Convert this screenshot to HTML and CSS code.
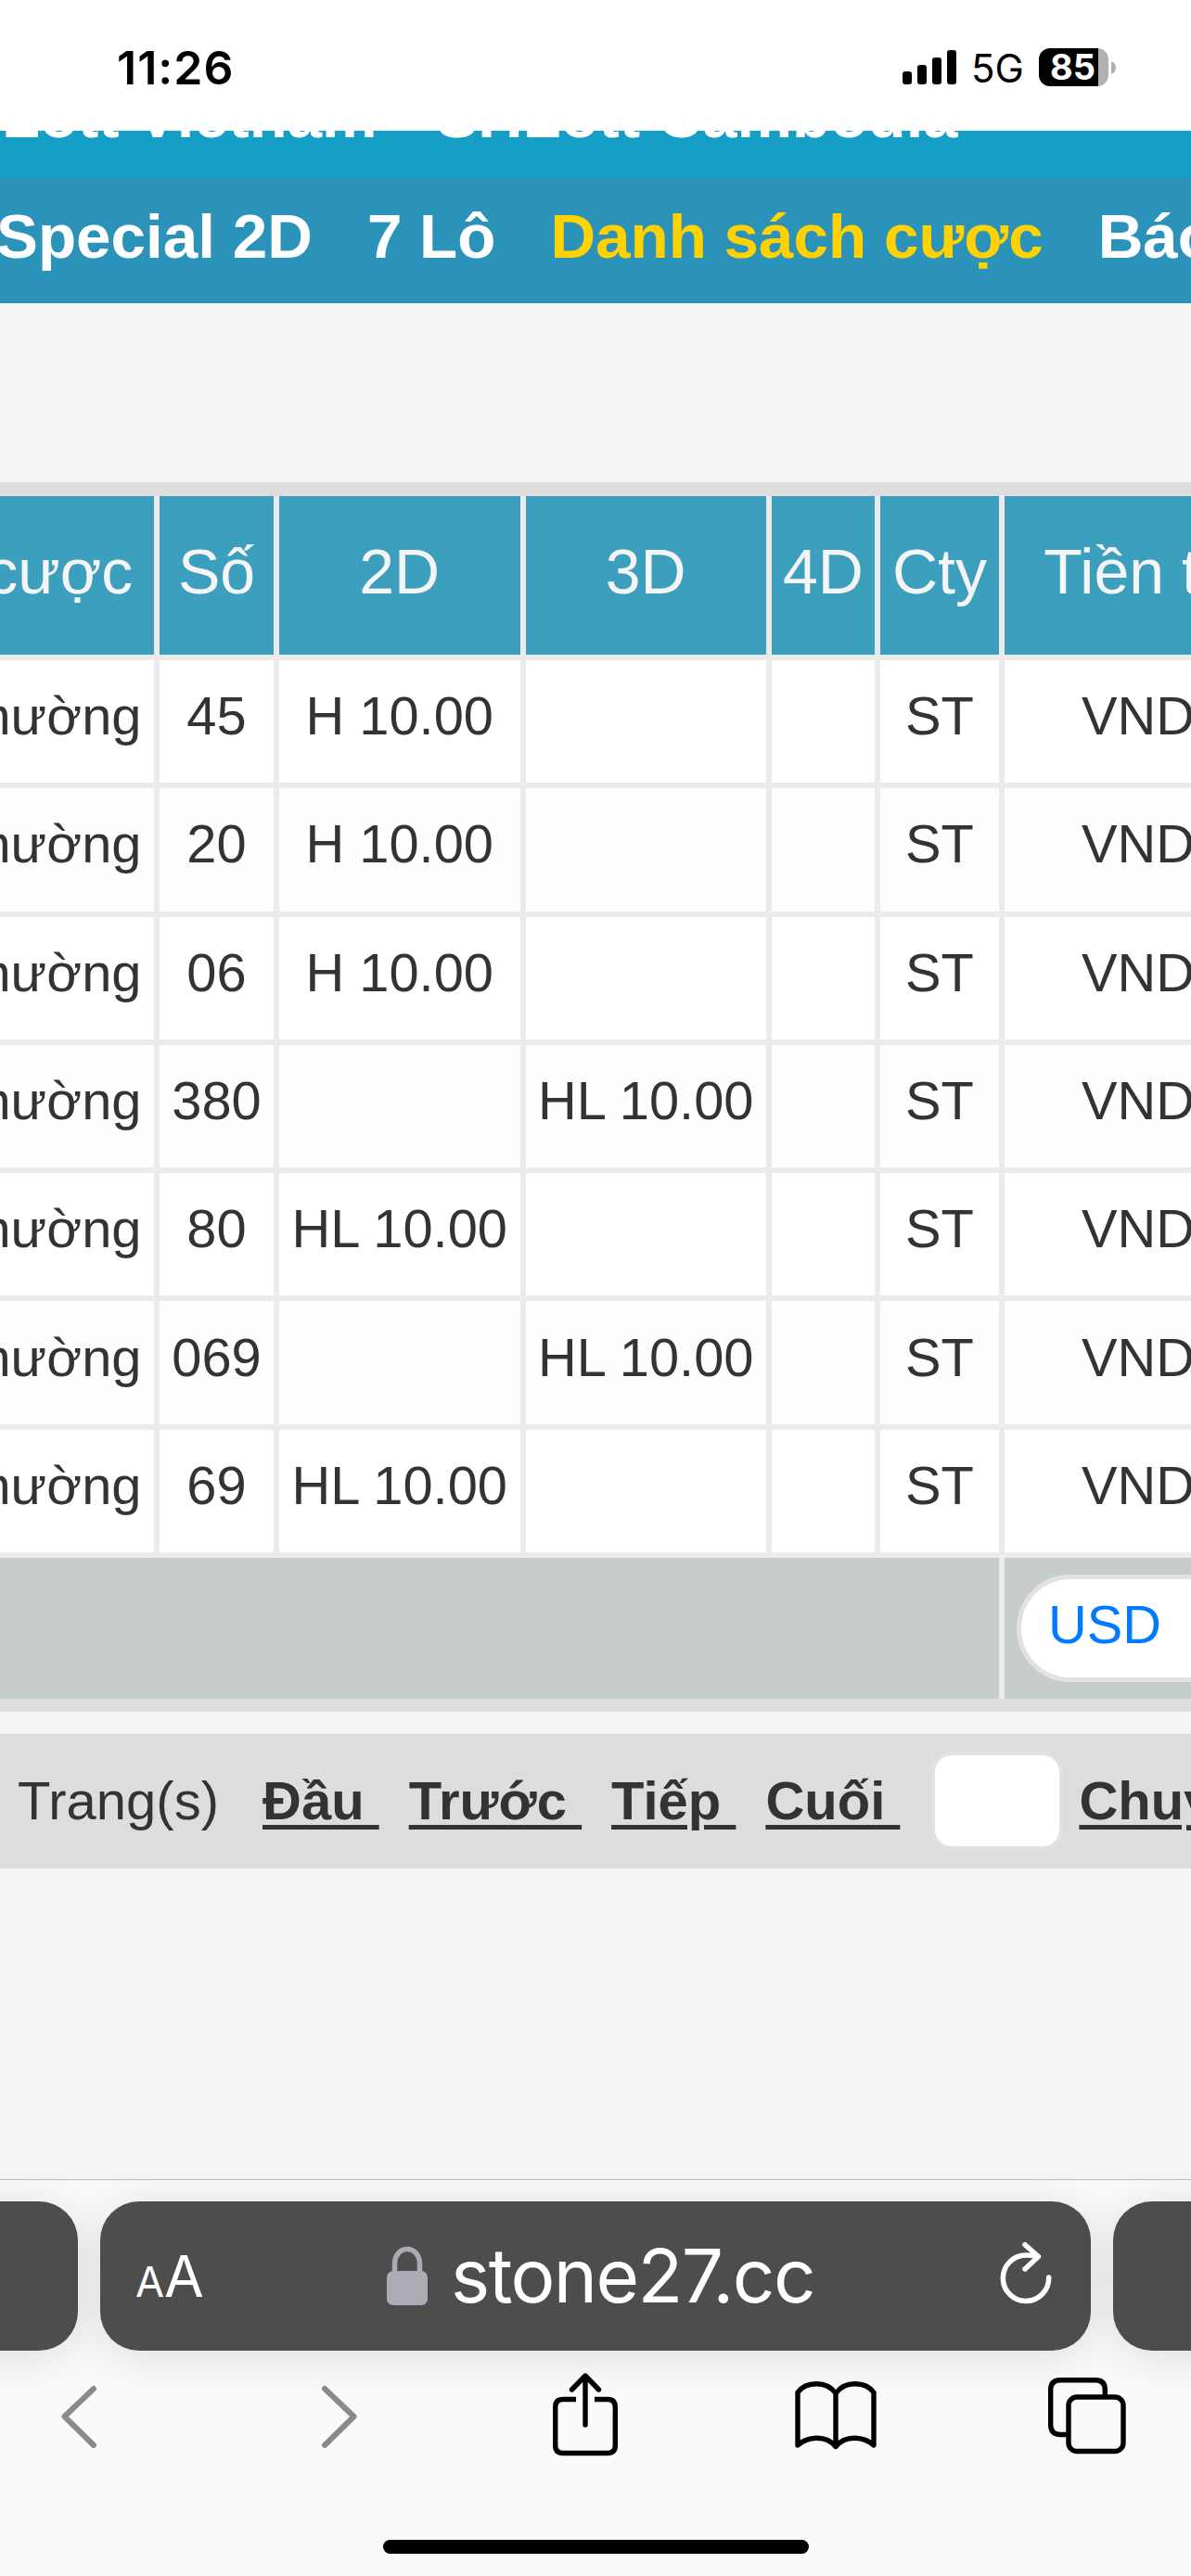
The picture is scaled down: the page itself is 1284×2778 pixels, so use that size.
FILE: index.html
```html
<!DOCTYPE html>
<html lang="vi">
<head>
    <meta charset="UTF-8">
    <meta name="viewport" content="width=device-width, initial-scale=1.0">
    <title>Danh sách cược</title>
    <link rel="stylesheet" href="styles.css">
</head>
<body>
    <div class="status-bar">
        <span class="time">11:26</span>
        <svg class="signal" width="58" height="38" viewBox="0 0 58 38">
            <rect x="0" y="23" width="10" height="14" rx="3"/>
            <rect x="16" y="16" width="10" height="21" rx="3"/>
            <rect x="32" y="8" width="10" height="29" rx="3"/>
            <rect x="48" y="0" width="10" height="37" rx="3"/>
        </svg>
        <span class="network">5G</span>
        <div class="battery"><span>85</span></div>
        <svg class="battery-nub" width="5" height="14" viewBox="0 0 5 14"><path d="M0 0Q5 2 5 7T0 14Z"/></svg>
    </div>

    <div class="page">
        <div class="site-bar">
            <span>SHLott Vietnam</span>
            <span>SHLott Cambodia</span>
        </div>
        <div class="menu">
            <a>Special 2D</a>
            <a>7 Lô</a>
            <a class="active">Danh sách cược</a>
            <a>Báo cáo</a>
        </div>

        <table class="bets">
            <colgroup>
                <col class="col-type"><col class="col-number"><col class="col-2d"><col class="col-3d">
                <col class="col-4d"><col class="col-company"><col class="col-currency">
            </colgroup>
            <thead>
                <tr><th>Loại cược</th><th>Số</th><th>2D</th><th>3D</th><th>4D</th><th>Cty</th><th>Tiền tệ</th></tr>
            </thead>
            <tbody>
                <tr><td>Bình thường</td><td>45</td><td>H 10.00</td><td></td><td></td><td>ST</td><td>VND</td></tr>
                <tr><td>Bình thường</td><td>20</td><td>H 10.00</td><td></td><td></td><td>ST</td><td>VND</td></tr>
                <tr><td>Bình thường</td><td>06</td><td>H 10.00</td><td></td><td></td><td>ST</td><td>VND</td></tr>
                <tr><td>Bình thường</td><td>380</td><td></td><td>HL 10.00</td><td></td><td>ST</td><td>VND</td></tr>
                <tr><td>Bình thường</td><td>80</td><td>HL 10.00</td><td></td><td></td><td>ST</td><td>VND</td></tr>
                <tr><td>Bình thường</td><td>069</td><td></td><td>HL 10.00</td><td></td><td>ST</td><td>VND</td></tr>
                <tr><td>Bình thường</td><td>69</td><td>HL 10.00</td><td></td><td></td><td>ST</td><td>VND</td></tr>
            </tbody>
            <tfoot>
                <tr><td colspan="6"></td><td><div class="currency">USD</div></td></tr>
            </tfoot>
        </table>

        <div class="pager">
            <span class="pages">Trang(s)</span>
            <a>Đầu&nbsp;</a>
            <a>Trước&nbsp;</a>
            <a>Tiếp&nbsp;</a>
            <a>Cuối&nbsp;</a>
            <div class="page-input"></div>
            <a>Chuyển</a>
        </div>
    </div>

    <div class="browser">
        <div class="tabs">
            <div class="tab"></div>
            <div class="tab current">
                <span class="text-size"><small>A</small>A</span>
                <svg class="lock" width="44" height="64" viewBox="0 0 44 64">
                    <path d="M8.500 30V20C8.500 -2 35.500 -2 35.500 20V30" fill="none" stroke="#acabb3" stroke-width="5.500"/>
                    <rect y="27" width="44" height="37" rx="7" fill="#acabb3"/>
                </svg>
                <span class="address">stone27.cc</span>
                <svg class="reload" width="56" height="70" viewBox="0 0 56 70">
                    <path d="M52.700 38A24.700 24.700 0 1 1 28 14Q35 14 40 15.500M27 2.800L41.500 15.500L27 29"/>
                </svg>
            </div>
            <div class="tab"></div>
        </div>
        <div class="toolbar">
            <svg class="icon muted" width="40" height="70" viewBox="0 0 40 70"><path d="M36 5L4.500 35L36 66"/></svg>
            <svg class="icon muted forward" width="40" height="70" viewBox="0 0 40 70"><path d="M4 5L35.500 35L4 66"/></svg>
            <svg class="icon share" width="70" height="90" viewBox="0 0 70 90">
                <path d="M25 28.500H11Q2.700 28.500 2.700 37V78Q2.700 86.500 11 86.500H59Q67.300 86.500 67.300 78V37Q67.300 28.500 59 28.500H45" stroke-linecap="butt"/>
                <path d="M35 56V4M20.500 18L35 3L49.500 18"/>
            </svg>
            <svg class="icon book" width="88" height="74" viewBox="0 0 88 74">
                <path d="M44 70.500V13C34 -1 12 0 3 12V69C13 60 33 57 44 70.500C55 57 75 60 85 69V12C76 0 54 -1 44 13"/>
            </svg>
            <svg class="icon all-tabs" width="84" height="83" viewBox="0 0 84 83">
                <path d="M20 61.500H13Q2.700 61.500 2.700 51V13Q2.700 2.700 13 2.700H51Q61.300 2.700 61.300 13V19" stroke-linecap="butt"/>
                <rect x="22" y="21" width="59" height="58.500" rx="9"/>
            </svg>
        </div>
        <div class="home-indicator"></div>
    </div>
</body>
</html>
```
FILE: styles.css
```css
/* Reset */
* {
    box-sizing: border-box;
}

body {
    margin: 0;
    width: 1284px;
    height: 2778px;
    overflow: hidden;
    display: flex;
    flex-direction: column;
    background: #f5f5f5;
    color: #333;
    font-family: "Liberation Sans", Arial, sans-serif;
}

/* Status bar */
.status-bar {
    height: 141px;
    flex: none;
    display: flex;
    align-items: center;
    padding: 4px 0 0 126px;
    background: #fff;
    color: #000;
    font-family: Inter, sans-serif;
}

.time {
    width: 847px;
    font-size: 50px;
    font-weight: 600;
    letter-spacing: 1px;
}

.network {
    width: 73px;
    margin: 2px 0 0 16px;
    font-size: 42px;
}

.battery {
    width: 75px;
    height: 41px;
    border-radius: 12px;
    background: linear-gradient(to right, #000 64px, #b0b0b0 64px);
    color: #fff;
    font-size: 38px;
    font-weight: 700;
    line-height: 41px;
    padding-left: 12px;
}

.battery-nub {
    margin-left: 3px;
    fill: #b0b0b0;
}

/* Page */
.page {
    height: 2209px;
    flex: none;
    overflow: hidden;
}

.site-bar {
    height: 51px;
    display: flex;
    gap: 64px;
    padding-right: 20px;
    background: #159ec6;
    color: #fff;
    font-size: 67px;
    font-weight: bold;
    line-height: 76px;
    white-space: nowrap;
    overflow: hidden;
}

.site-bar span {
    margin-top: -54px;
}

.site-bar span:first-child {
    margin-left: -91px;
}

.menu {
    height: 135px;
    display: flex;
    gap: 59px;
    padding-top: 24px;
    background: #2b93b9;
    color: #fff;
    font-size: 67.400px;
    font-weight: bold;
    line-height: 78px;
    white-space: nowrap;
}

.menu a:first-child {
    margin-left: -4px;
}

.menu .active {
    color: #ffd200;
}

/* Bet list */
.bets {
    width: 1557px;
    margin: 193px 0 0 -178px;
    table-layout: fixed;
    border-collapse: separate;
    border-spacing: 0;
    border-top: 15px solid #ddd;
    border-bottom: 14px solid #ddd;
    text-align: center;
    font-size: 57.800px;
    line-height: 66px;
    white-space: nowrap;
}

.col-type { width: 350px; }
.col-number { width: 129px; }
.col-2d { width: 265.500px; }
.col-3d { width: 265.500px; }
.col-4d { width: 117px; }
.col-company { width: 134px; }
.col-currency { width: 296px; }

.bets th,
.bets td {
    border-right: 6px solid #ebebeb;
    border-bottom: 6.400px solid #ebebeb;
}

.bets th {
    height: 177px;
    padding: 0 0 9px;
    background: #3d9fbe;
    color: #f5f5f5;
    font-size: 68px;
    font-weight: normal;
}

.bets td {
    height: 138.300px;
    padding: 0 0 12px;
    background: #fff;
}

.bets th:first-child,
.bets tbody td:first-child {
    padding-right: 7px;
}

.bets tbody td:last-child {
    padding-right: 2px;
}

.bets tbody tr:nth-child(even) td {
    background: #fdfdfd;
}

.bets tfoot td {
    height: 152px;
    padding: 0 13px;
    border-bottom: 0;
    background: #c7cdcc;
}

.currency {
    height: 116px;
    padding: 16px 0 0 29px;
    border: 5px solid #e2e2e2;
    border-radius: 58px;
    background: #fff;
    color: #007aff;
    text-align: left;
}

/* Pager */
.pager {
    height: 145px;
    display: flex;
    align-items: center;
    gap: 32px;
    margin-top: 24px;
    padding: 0 0 2px 19px;
    background: #ddd;
    font-size: 58px;
    white-space: nowrap;
}

.pages {
    margin-right: 15px;
}

.pager a {
    font-weight: bold;
    text-decoration: underline 5px;
    text-underline-offset: 6px;
}

.page-input {
    width: 142px;
    height: 106px;
    flex: none;
    margin: 0 -15px 0 2px;
    border: 4px solid #e2e2e2;
    border-radius: 22px;
    background: #fff;
}

/* Browser controls */
.browser {
    height: 428px;
    display: flex;
    flex-direction: column;
    align-items: center;
    border-top: 1px solid #bbb;
    background: #fafafa;
}

.tabs {
    display: flex;
    gap: 24px;
    margin-top: 23px;
}

.tab {
    width: 1068px;
    height: 161px;
    flex: none;
    display: flex;
    align-items: center;
    border-radius: 42px;
    background: #4d4d4d;
    box-shadow: 0 6px 50px rgba(0, 0, 0, 0.12);
    color: #fff;
    font-family: Inter, sans-serif;
}

.text-size {
    width: 271px;
    margin-left: 38px;
    font-size: 62px;
    letter-spacing: -1px;
}

.text-size small {
    margin-right: 1px;
    font-size: 45px;
}

.lock {
    margin-bottom: 2px;
}

.address {
    width: 592px;
    margin: 0 0 2px 25px;
    font-size: 80px;
    letter-spacing: -1.600px;
}

.reload {
    flex: none;
    margin-bottom: 4px;
    fill: none;
    stroke: #fff;
    stroke-width: 5.500;
    stroke-linecap: round;
    stroke-linejoin: round;
}

.toolbar {
    width: 1284px;
    height: 143px;
    display: flex;
    align-items: center;
    padding: 0 0 2px 65px;
}

.icon {
    flex: none;
    fill: none;
    stroke: #000;
    stroke-width: 5.400;
    stroke-linecap: round;
    stroke-linejoin: round;
}

.muted {
    stroke: #8a8a8a;
    stroke-width: 6;
}

.forward {
    margin-left: 241px;
}

.share {
    margin: 0 191px 4px 210px;
}

.book {
    margin-bottom: 1px;
}

.all-tabs {
    margin-left: 185px;
}

.home-indicator {
    width: 459px;
    height: 15px;
    margin-top: 61px;
    border-radius: 8px;
    background: #000;
}
```
